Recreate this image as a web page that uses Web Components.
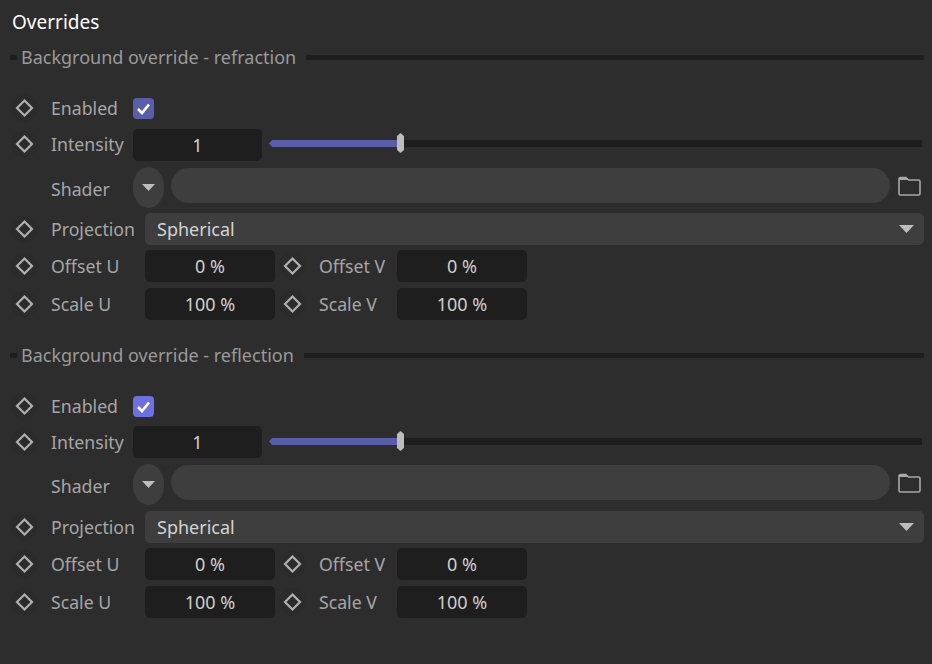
<!DOCTYPE html>
<html>
<head>
<meta charset="utf-8">
<title>Overrides</title>
<style>
  body {
    margin: 0;
    background: #2d2d2d;
    font-family: "Noto Sans", "Open Sans", sans-serif;
  }
</style>
</head>
<body>
<override-panel>
  <override-group title="Background override - refraction" accent="#5a5ea8"></override-group>
  <override-group title="Background override - reflection" accent="#6f70e0" style="--shader-gap: 3px; --projection-gap: 6px; --intensity-shift: 0px"></override-group>
</override-panel>

<script>
const diamond = /* HTML */ `
  <svg width="28" height="28" viewBox="0 0 28 28">
    <circle cx="14" cy="14" r="13.5" fill="#2b2b2b" />
    <path d="M14.5 6.5 L22 14 L14.5 21.5 L7 14 Z" fill="none" stroke="#b0b0b0" stroke-width="2.2" />
  </svg>
`;

const arrow = (w, h) => /* HTML */ `
  <svg width="${w}" height="${h}" viewBox="0 0 16 9" preserveAspectRatio="none"><path d="M0 0 H16 L8 9 Z" fill="#bdbdbd" /></svg>
`;

class OverridePanel extends HTMLElement {
  constructor() {
    super();
    this.attachShadow({ mode: "open" });
  }

  connectedCallback() {
    this.shadowRoot.innerHTML = /* HTML */ `
      <style>
        :host {
          display: block;
          height: 664px;
          overflow: hidden;
          box-sizing: border-box;
          padding: 8px 8px 0 10px;
        }
        h1 {
          margin: 0 0 0 2px;
          height: 28px;
          line-height: 28px;
          font-size: 19px;
          font-weight: 400;
          color: #fff;
        }
        ::slotted(override-group) {
          margin-top: 8px;
        }
        ::slotted(override-group:last-child) {
          margin-top: 22px;
        }
      </style>
      <h1>Overrides</h1>
      <slot></slot>
    `;
  }
}

class OverrideRow extends HTMLElement {
  constructor() {
    super();
    this.attachShadow({ mode: "open" });
  }

  connectedCallback() {
    const noKey = this.hasAttribute("nokey");
    this.shadowRoot.innerHTML = /* HTML */ `
      <style>
        :host {
          display: flex;
          align-items: center;
          height: var(--row-h, 32px);
          margin-top: var(--row-gap, 5px);
        }
        .key {
          width: 28px;
          height: 28px;
          flex: none;
          visibility: ${noKey ? "hidden" : "visible"};
        }
        .key svg { display: block; }
        .label {
          flex: none;
          box-sizing: border-box;
          width: var(--label-w, 94px);
          margin-left: 13px;
          margin-top: var(--label-shift, -1px);
          font-size: 17.7px;
          color: #a6a6a6;
          white-space: nowrap;
        }
      </style>
      <div class="key">${diamond}</div>
      <div class="label">${this.getAttribute("label")}</div>
      <slot></slot>
    `;
  }
}

class OverrideNumber extends HTMLElement {
  constructor() {
    super();
    this.attachShadow({ mode: "open" });
  }

  connectedCallback() {
    this.shadowRoot.innerHTML = /* HTML */ `
      <style>
        :host {
          display: flex;
          align-items: center;
          justify-content: center;
          flex: none;
          box-sizing: border-box;
          width: var(--field-w, 130px);
          height: 32px;
          margin-top: var(--field-shift, 0);
          background: #1e1e1e;
          border-radius: 5px;
          font-size: 18px;
          color: #cfcfcf;
        }
      </style>
      <slot></slot>
    `;
  }
}

class OverrideCheck extends HTMLElement {
  constructor() {
    super();
    this.attachShadow({ mode: "open" });
  }

  connectedCallback() {
    this.shadowRoot.innerHTML = /* HTML */ `
      <style>
        :host {
          display: block;
          flex: none;
          width: 21px;
          height: 21px;
        }
        svg { display: block; }
      </style>
      <svg width="21" height="21" viewBox="0 0 21 21">
        <rect width="21" height="21" rx="4" fill="${this.getAttribute("color")}" />
        <path d="M5 11 L9 15 L16 6.5" fill="none" stroke="#fff" stroke-width="2.6" />
      </svg>
    `;
  }
}

class OverrideSlider extends HTMLElement {
  constructor() {
    super();
    this.attachShadow({ mode: "open" });
  }

  connectedCallback() {
    this.shadowRoot.innerHTML = /* HTML */ `
      <style>
        :host {
          display: block;
          position: relative;
          flex: 1;
          height: 20px;
          margin: -2px 2px 0 7px;
        }
        .track, .fill {
          position: absolute;
          top: 7px;
          height: 7px;
          clip-path: polygon(3px 0, 100% 0, 100% 100%, 3px 100%, 0 50%);
        }
        .track { left: 0; right: 0; background: #1e1e1e; }
        .fill { left: 0; width: 130px; background: #5a5ea8; }
        .thumb {
          position: absolute;
          left: 128px;
          top: 0;
          width: 7px;
          height: 20px;
          background: #bcbcbc;
          clip-path: polygon(50% 0, 100% 15%, 100% 85%, 50% 100%, 0 85%, 0 15%);
        }
      </style>
      <div class="track"></div>
      <div class="fill"></div>
      <div class="thumb"></div>
    `;
  }
}

class OverrideShader extends HTMLElement {
  constructor() {
    super();
    this.attachShadow({ mode: "open" });
  }

  connectedCallback() {
    this.shadowRoot.innerHTML = /* HTML */ `
      <style>
        :host {
          display: flex;
          align-items: center;
          flex: 1;
          gap: 7px;
        }
        .menu {
          flex: none;
          display: flex;
          align-items: center;
          justify-content: center;
          width: 31px;
          height: 41px;
          border-radius: 16px / 20px;
          background: #3e3e3e;
        }
        .link {
          flex: 1;
          height: 35px;
          margin-top: -3px;
          border-radius: 18px;
          background: #3e3e3e;
        }
        .folder { flex: none; display: block; margin: -3px 3px 0 1px; }
      </style>
      <div class="menu">${arrow(13, 7)}</div>
      <div class="link"></div>
      <svg class="folder" width="23" height="20" viewBox="0 0 23 20">
        <path d="M1 17.5 V3 Q1 1.5 2.5 1.5 H8 L10.5 4 H20.5 Q22 4 22 5.5 V17.5 Q22 19 20.5 19 H2.5 Q1 19 1 17.5 Z" fill="none" stroke="#a8a8a8" stroke-width="1.6" />
        <path d="M1 3 Q1 1.5 2.5 1.5 H8 L10.5 4 H1 Z" fill="#a8a8a8" />
      </svg>
    `;
  }
}

class OverrideSelect extends HTMLElement {
  constructor() {
    super();
    this.attachShadow({ mode: "open" });
  }

  connectedCallback() {
    this.shadowRoot.innerHTML = /* HTML */ `
      <style>
        :host {
          display: flex;
          align-items: center;
          justify-content: space-between;
          flex: 1;
          height: 32px;
          box-sizing: border-box;
          padding: 0 10px 0 12px;
          background: #3e3e3e;
          border-radius: 5px;
          font-size: 18px;
          color: #d4d4d4;
        }
      </style>
      <slot></slot>
      ${arrow(15, 8)}
    `;
  }
}

class OverrideGroup extends HTMLElement {
  constructor() {
    super();
    this.attachShadow({ mode: "open" });
  }

  connectedCallback() {
    const accent = this.getAttribute("accent");
    this.shadowRoot.innerHTML = /* HTML */ `
      <style>
        :host {
          display: block;
        }
        header {
          display: flex;
          align-items: center;
          height: 26px;
          margin-bottom: 20px;
          font-size: 18px;
          color: #9a9a9a;
          white-space: nowrap;
        }
        header i {
          display: block;
          height: 5px;
          background: #1e1e1e;
        }
        header i:first-child { width: 7px; margin-right: 4px; }
        header i:last-child { flex: 1; margin-left: 10px; }
        override-row.enabled { --row-h: 36px; --row-gap: 0; --label-w: 82px; }
        override-row.intensity { --row-h: 36px; --row-gap: 0; --label-w: 82px; --field-w: 129px; --field-shift: var(--intensity-shift, 1px); }
        override-row.shader { --row-h: 42px; --row-gap: var(--shader-gap, 4px); --label-w: 82px; --label-shift: 3px; }
        override-row.projection { --row-gap: var(--projection-gap, 5px); }
        .pair { display: flex; margin-top: 5px; }
        .pair.scale { margin-top: 6px; }
        .pair override-row { --row-gap: 0; }
        .pair .right { margin-left: 3px; --label-w: 78px; }
      </style>
      <header><i></i>${this.getAttribute("title")}<i></i></header>
      <override-row class="enabled" label="Enabled"><override-check color="${accent}"></override-check></override-row>
      <override-row class="intensity" label="Intensity"><override-number>1</override-number><override-slider></override-slider></override-row>
      <override-row class="shader" label="Shader" nokey><override-shader></override-shader></override-row>
      <override-row class="projection" label="Projection"><override-select>Spherical</override-select></override-row>
      <div class="pair">
        <override-row label="Offset U"><override-number>0 %</override-number></override-row>
        <override-row class="right" label="Offset V"><override-number>0 %</override-number></override-row>
      </div>
      <div class="pair scale">
        <override-row label="Scale U"><override-number>100 %</override-number></override-row>
        <override-row class="right" label="Scale V"><override-number>100 %</override-number></override-row>
      </div>
    `;
  }
}

customElements.define("override-panel", OverridePanel);
customElements.define("override-row", OverrideRow);
customElements.define("override-number", OverrideNumber);
customElements.define("override-check", OverrideCheck);
customElements.define("override-slider", OverrideSlider);
customElements.define("override-shader", OverrideShader);
customElements.define("override-select", OverrideSelect);
customElements.define("override-group", OverrideGroup);
</script>
</body>
</html>
